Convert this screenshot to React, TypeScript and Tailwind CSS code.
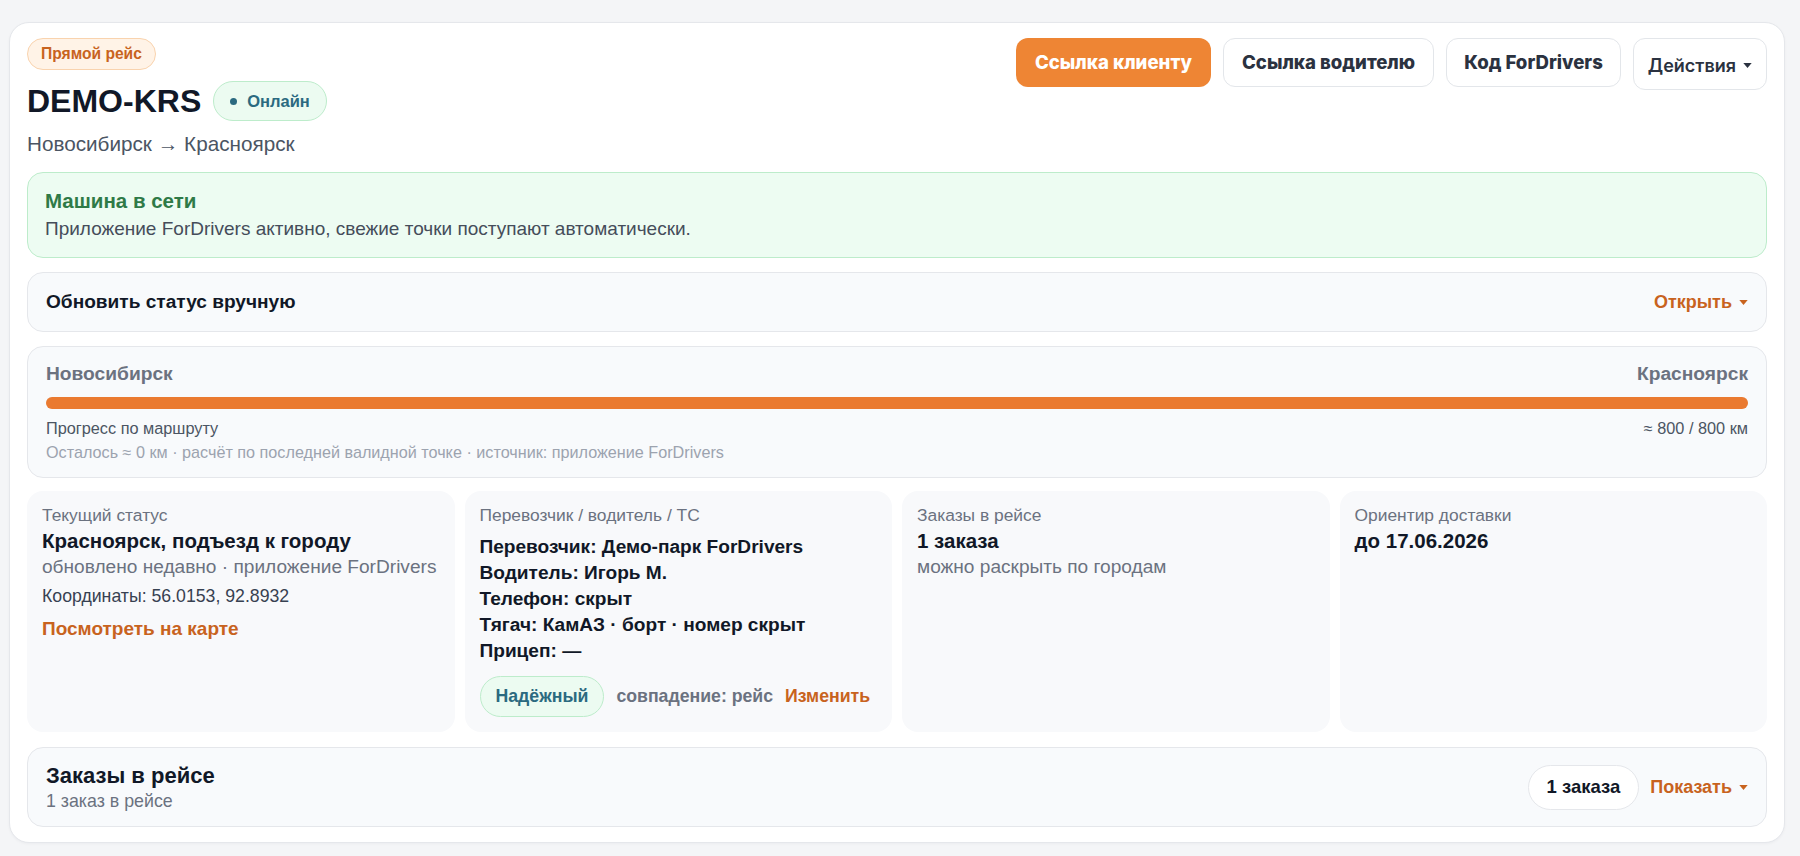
import React from 'react';

const Caret = ({ className }: { className?: string }) => (
  <svg viewBox="0 0 10 6" className={className} fill="currentColor" aria-hidden>
    <path d="M0 0h10L5 6z" />
  </svg>
);

const InfoCard = ({ label, children }: { label: string; children: React.ReactNode }) => (
  <div className="rounded-[16px] bg-[#f8f9fb] px-[15px] pt-[13px] pb-[14px]">
    <div className="text-[17.4px] leading-[23px] text-[#6b7280]">{label}</div>
    {children}
  </div>
);

const App = (): React.ReactElement => (
  <div className="min-h-screen bg-[#f4f5f7] pl-[9px] pr-[15px] pt-[22px] pb-[13px] font-['Liberation_Sans',Arial,sans-serif]">
    <div className="rounded-[20px] border border-[#e5e7eb] bg-white px-[17px] pt-[15px] pb-[15px] shadow-[0_1px_3px_rgba(15,23,42,0.04)]">
      {/* header: trip name + actions */}
      <div className="flex items-start justify-between">
        <div>
          <span className="inline-flex h-[32px] items-center rounded-full border border-[#f9d3ae] bg-[#fff3e7] px-[13px] text-[15.6px] font-bold text-[#c8631e]">
            Прямой рейс
          </span>
          <div className="mt-[11px] flex items-center gap-[12px]">
            <h1 className="text-[32px] font-bold leading-none text-[#111827]">DEMO-KRS</h1>
            <span className="inline-flex h-[40px] items-center gap-[10px] rounded-full border border-[#bdeccb] bg-[#ecfbf1] px-[16px] text-[16.5px] font-bold text-[#2b6a80]">
              <span className="h-[7px] w-[7px] rounded-full bg-[#2b6a80]" />
              Онлайн
            </span>
          </div>
          <div className="mt-[11px] text-[20.7px] leading-[24px] text-[#4b5563]">Новосибирск → Красноярск</div>
        </div>
        <div className="flex items-start gap-[12px] font-['Inter',sans-serif]">
          <button className="h-[49px] rounded-[12px] bg-[#ee8534] px-[19px] text-[18.6px] font-extrabold text-white">
            Ссылка клиенту
          </button>
          <button className="h-[49px] rounded-[12px] border border-[#e3e6ea] bg-white px-[18px] text-[18.6px] font-extrabold text-[#2b3240]">
            Ссылка водителю
          </button>
          <button className="h-[49px] rounded-[12px] border border-[#e3e6ea] bg-white px-[17px] text-[18.6px] font-extrabold text-[#2b3240]">
            Код ForDrivers
          </button>
          <button className="flex h-[52px] items-center gap-[7px] rounded-[12px] border border-[#e3e6ea] bg-white px-[14px] pt-[3px] text-[18px] font-semibold text-[#2b3240]">
            Действия
            <Caret className="h-[5px] w-[9px]" />
          </button>
        </div>
      </div>

      {/* connection notice */}
      <div className="mt-[16px] rounded-[16px] border border-[#bdeccb] bg-[#edfcf2] px-[17px] pt-[16px] pb-[17px]">
        <div className="text-[20.5px] font-bold leading-[24px] text-[#2f7a47]">Машина в сети</div>
        <div className="mt-[4px] text-[19px] leading-[23px] text-[#454d5a]">
          Приложение ForDrivers активно, свежие точки поступают автоматически.
        </div>
      </div>

      {/* manual status */}
      <div className="mt-[14px] flex h-[60px] items-center justify-between rounded-[16px] border border-[#e5e7eb] bg-[#f8fafc] px-[18px]">
        <span className="text-[19.1px] font-bold text-[#111827]">Обновить статус вручную</span>
        <span className="flex items-center gap-[7px] text-[18px] font-bold text-[#c8631e]">
          Открыть
          <Caret className="h-[5px] w-[9px]" />
        </span>
      </div>

      {/* route progress */}
      <div className="mt-[14px] rounded-[16px] border border-[#e5e7eb] bg-[#f8fafc] px-[18px] pt-[15px] pb-[14px]">
        <div className="flex justify-between text-[19.2px] font-bold leading-[24px] text-[#6b7280]">
          <span>Новосибирск</span>
          <span>Красноярск</span>
        </div>
        <div className="mt-[11px] h-[12px] rounded-full bg-[#eceef1]">
          <div className="h-full rounded-full bg-[#ea7a30]" style={{ width: '100%' }} />
        </div>
        <div className="mt-[8px] flex justify-between text-[16.3px] leading-[22px] text-[#4b5563]">
          <span>Прогресс по маршруту</span>
          <span>≈ 800 / 800 км</span>
        </div>
        <div className="mt-[2px] text-[16.2px] leading-[22px] text-[#9ca3af]">
          Осталось ≈ 0 км · расчёт по последней валидной точке · источник: приложение ForDrivers
        </div>
      </div>

      {/* summary cards */}
      <div className="mt-[13px] grid h-[241px] grid-cols-4 gap-[10px]">
        <InfoCard label="Текущий статус">
          <div className="mt-[1px] text-[20.5px] font-bold leading-[26px] text-[#111827]">Красноярск, подъезд к городу</div>
          <div className="text-[19.1px] leading-[26px] text-[#6b7280]">обновлено недавно · приложение ForDrivers</div>
          <div className="mt-[3px] text-[17.7px] leading-[26px] text-[#374151]">Координаты: 56.0153, 92.8932</div>
          <div className="mt-[7px] text-[19px] font-bold leading-[26px] text-[#c8631e]">Посмотреть на карте</div>
        </InfoCard>
        <InfoCard label="Перевозчик / водитель / ТС">
          <div className="mt-[7px] text-[19.1px] font-bold leading-[26px] text-[#111827]">
            <div>Перевозчик: Демо-парк ForDrivers</div>
            <div>Водитель: Игорь М.</div>
            <div>Телефон: скрыт</div>
            <div>Тягач: КамАЗ · борт · номер скрыт</div>
            <div>Прицеп: —</div>
          </div>
          <div className="mt-[12px] flex items-center gap-[12px] text-[17.7px] font-bold">
            <span className="inline-flex h-[41px] items-center rounded-full border border-[#bdeccb] bg-[#ecfbf1] px-[15px] text-[#2b6a80]">
              Надёжный
            </span>
            <span className="text-[#6b7280]">совпадение: рейс</span>
            <span className="text-[#c8631e]">Изменить</span>
          </div>
        </InfoCard>
        <InfoCard label="Заказы в рейсе">
          <div className="mt-[1px] text-[20.5px] font-bold leading-[26px] text-[#111827]">1 заказа</div>
          <div className="text-[19.1px] leading-[26px] text-[#6b7280]">можно раскрыть по городам</div>
        </InfoCard>
        <InfoCard label="Ориентир доставки">
          <div className="mt-[1px] text-[20.5px] font-bold leading-[26px] text-[#111827]">до 17.06.2026</div>
        </InfoCard>
      </div>

      {/* orders in trip */}
      <div className="mt-[15px] flex h-[80px] items-center justify-between rounded-[16px] border border-[#e5e7eb] bg-[#f8fafc] px-[18px]">
        <div className="pt-[1px]">
          <div className="text-[22px] font-bold leading-[26px] text-[#111827]">Заказы в рейсе</div>
          <div className="mt-[1px] text-[17.8px] leading-[22px] text-[#6b7280]">1 заказ в рейсе</div>
        </div>
        <div className="flex items-center gap-[11px]">
          <span className="inline-flex h-[45px] items-center rounded-full border border-[#e5e7eb] bg-white px-[18px] text-[18.5px] font-bold text-[#111827]">
            1 заказа
          </span>
          <span className="flex items-center gap-[7px] text-[18px] font-bold text-[#c8631e]">
            Показать
            <Caret className="h-[5px] w-[9px]" />
          </span>
        </div>
      </div>
    </div>
  </div>
);

export default App;
